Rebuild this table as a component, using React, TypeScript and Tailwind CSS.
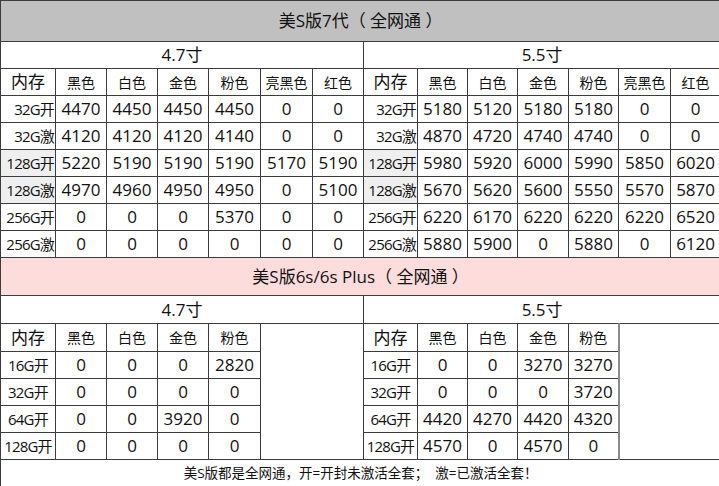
const FONT = {
  fontFamily: '"Open Sans", "Noto Sans CJK SC", sans-serif',
};

const COLORS_7 = ["黑色", "白色", "金色", "粉色", "亮黑色", "红色"];
const COLORS_6S = ["黑色", "白色", "金色", "粉色"];

// each row: [label47, values47, label55, values55, shaded]
const ROWS_7: [string, number[], string, number[], boolean][] = [
  ["32G开", [4470, 4450, 4450, 4450, 0, 0], "32G开", [5180, 5120, 5180, 5180, 0, 0], false],
  ["32G激", [4120, 4120, 4120, 4140, 0, 0], "32G激", [4870, 4720, 4740, 4740, 0, 0], false],
  ["128G开", [5220, 5190, 5190, 5190, 5170, 5190], "128G开", [5980, 5920, 6000, 5990, 5850, 6020], true],
  ["128G激", [4970, 4960, 4950, 4950, 0, 5100], "128G激", [5670, 5620, 5600, 5550, 5570, 5870], true],
  ["256G开", [0, 0, 0, 5370, 0, 0], "256G开", [6220, 6170, 6220, 6220, 6220, 6520], false],
  ["256G激", [0, 0, 0, 0, 0, 0], "256G激", [5880, 5900, 0, 5880, 0, 6120], false],
];

const ROWS_6S: [string, number[], number[]][] = [
  ["16G开", [0, 0, 0, 2820], [0, 0, 3270, 3270]],
  ["32G开", [0, 0, 0, 0], [0, 0, 0, 3720]],
  ["64G开", [0, 0, 3920, 0], [4420, 4270, 4420, 4320]],
  ["128G开", [0, 0, 0, 0], [4570, 0, 4570, 0]],
];

const WIDTHS = [55, 51, 51, 51, 52, 52, 51, 54, 50, 50, 51, 50, 52, 50];

const cell = "border border-[#3c3c3c] p-0 text-center align-middle text-[#111]";
const num = `${cell} text-[17px]`;
const head = `${cell} text-[14px]`;
const label = `${cell} text-[15px] whitespace-nowrap tracking-[-0.8px]`;

export default function App() {
  return (
    <div className="h-[486px] w-[719px] overflow-hidden bg-white" style={FONT}>
      <table className="w-[719px] table-fixed border-collapse">
        <colgroup>
          {WIDTHS.map((w, i) => (
            <col key={i} style={{ width: w }} />
          ))}
        </colgroup>
        <tbody>
          <tr className="h-[41px]">
            <td colSpan={14} className={`${cell} bg-[#c0c0c0] text-[17px]`}>
              美S版7代（ 全网通 ）
            </td>
          </tr>
          <tr className="h-[27px]">
            <td colSpan={7} className={`${cell} text-[17px]`}>4.7寸</td>
            <td colSpan={7} className={`${cell} text-[17px]`}>5.5寸</td>
          </tr>
          <tr className="h-[27px]">
            <td className={`${cell} text-[17px]`}>内存</td>
            {COLORS_7.map((c) => (
              <td key={"a" + c} className={head}>{c}</td>
            ))}
            <td className={`${cell} text-[17px]`}>内存</td>
            {COLORS_7.map((c) => (
              <td key={"b" + c} className={head}>{c}</td>
            ))}
          </tr>
          {ROWS_7.map(([l1, v1, l2, v2, shaded]) => (
            <tr key={l1} className="h-[27px]">
              <td className={`${label} pr-[1px] text-right ${shaded ? "bg-[#efefef]" : ""}`}>{l1}</td>
              {v1.map((v, i) => (
                <td key={i} className={num}>{v}</td>
              ))}
              <td className={`${label} pr-[1px] text-right ${shaded ? "bg-[#efefef]" : ""}`}>{l2}</td>
              {v2.map((v, i) => (
                <td key={i} className={num}>{v}</td>
              ))}
            </tr>
          ))}
          <tr className="h-[38px]">
            <td colSpan={14} className={`${cell} bg-[#fddcdc] text-[17px]`}>
              美S版6s/6s Plus（ 全网通 ）
            </td>
          </tr>
          <tr className="h-[28px]">
            <td colSpan={7} className={`${cell} text-[17px]`}>4.7寸</td>
            <td colSpan={7} className={`${cell} text-[17px]`}>5.5寸</td>
          </tr>
          <tr className="h-[28px]">
            <td className={`${cell} text-[17px]`}>内存</td>
            {COLORS_6S.map((c) => (
              <td key={"a" + c} className={head}>{c}</td>
            ))}
            <td colSpan={2} rowSpan={5} className="border border-[#3c3c3c] p-0" />
            <td className={`${cell} text-[17px]`}>内存</td>
            {COLORS_6S.map((c) => (
              <td key={"b" + c} className={head}>{c}</td>
            ))}
            <td colSpan={2} rowSpan={5} className="border border-[#3c3c3c] border-l-2 border-l-[#8a8a8a] p-0" />
          </tr>
          {ROWS_6S.map(([l, v1, v2]) => (
            <tr key={l} className="h-[27px]">
              <td className={label}>{l}</td>
              {v1.map((v, i) => (
                <td key={i} className={num}>{v}</td>
              ))}
              <td className={label}>{l}</td>
              {v2.map((v, i) => (
                <td key={i} className={num}>{v}</td>
              ))}
            </tr>
          ))}
          <tr className="h-[27px]">
            <td colSpan={14} className={`${cell} text-[13.5px]`}>
              美S版都是全网通，开=开封未激活全套；&nbsp; 激=已激活全套！
            </td>
          </tr>
        </tbody>
      </table>
    </div>
  );
}
